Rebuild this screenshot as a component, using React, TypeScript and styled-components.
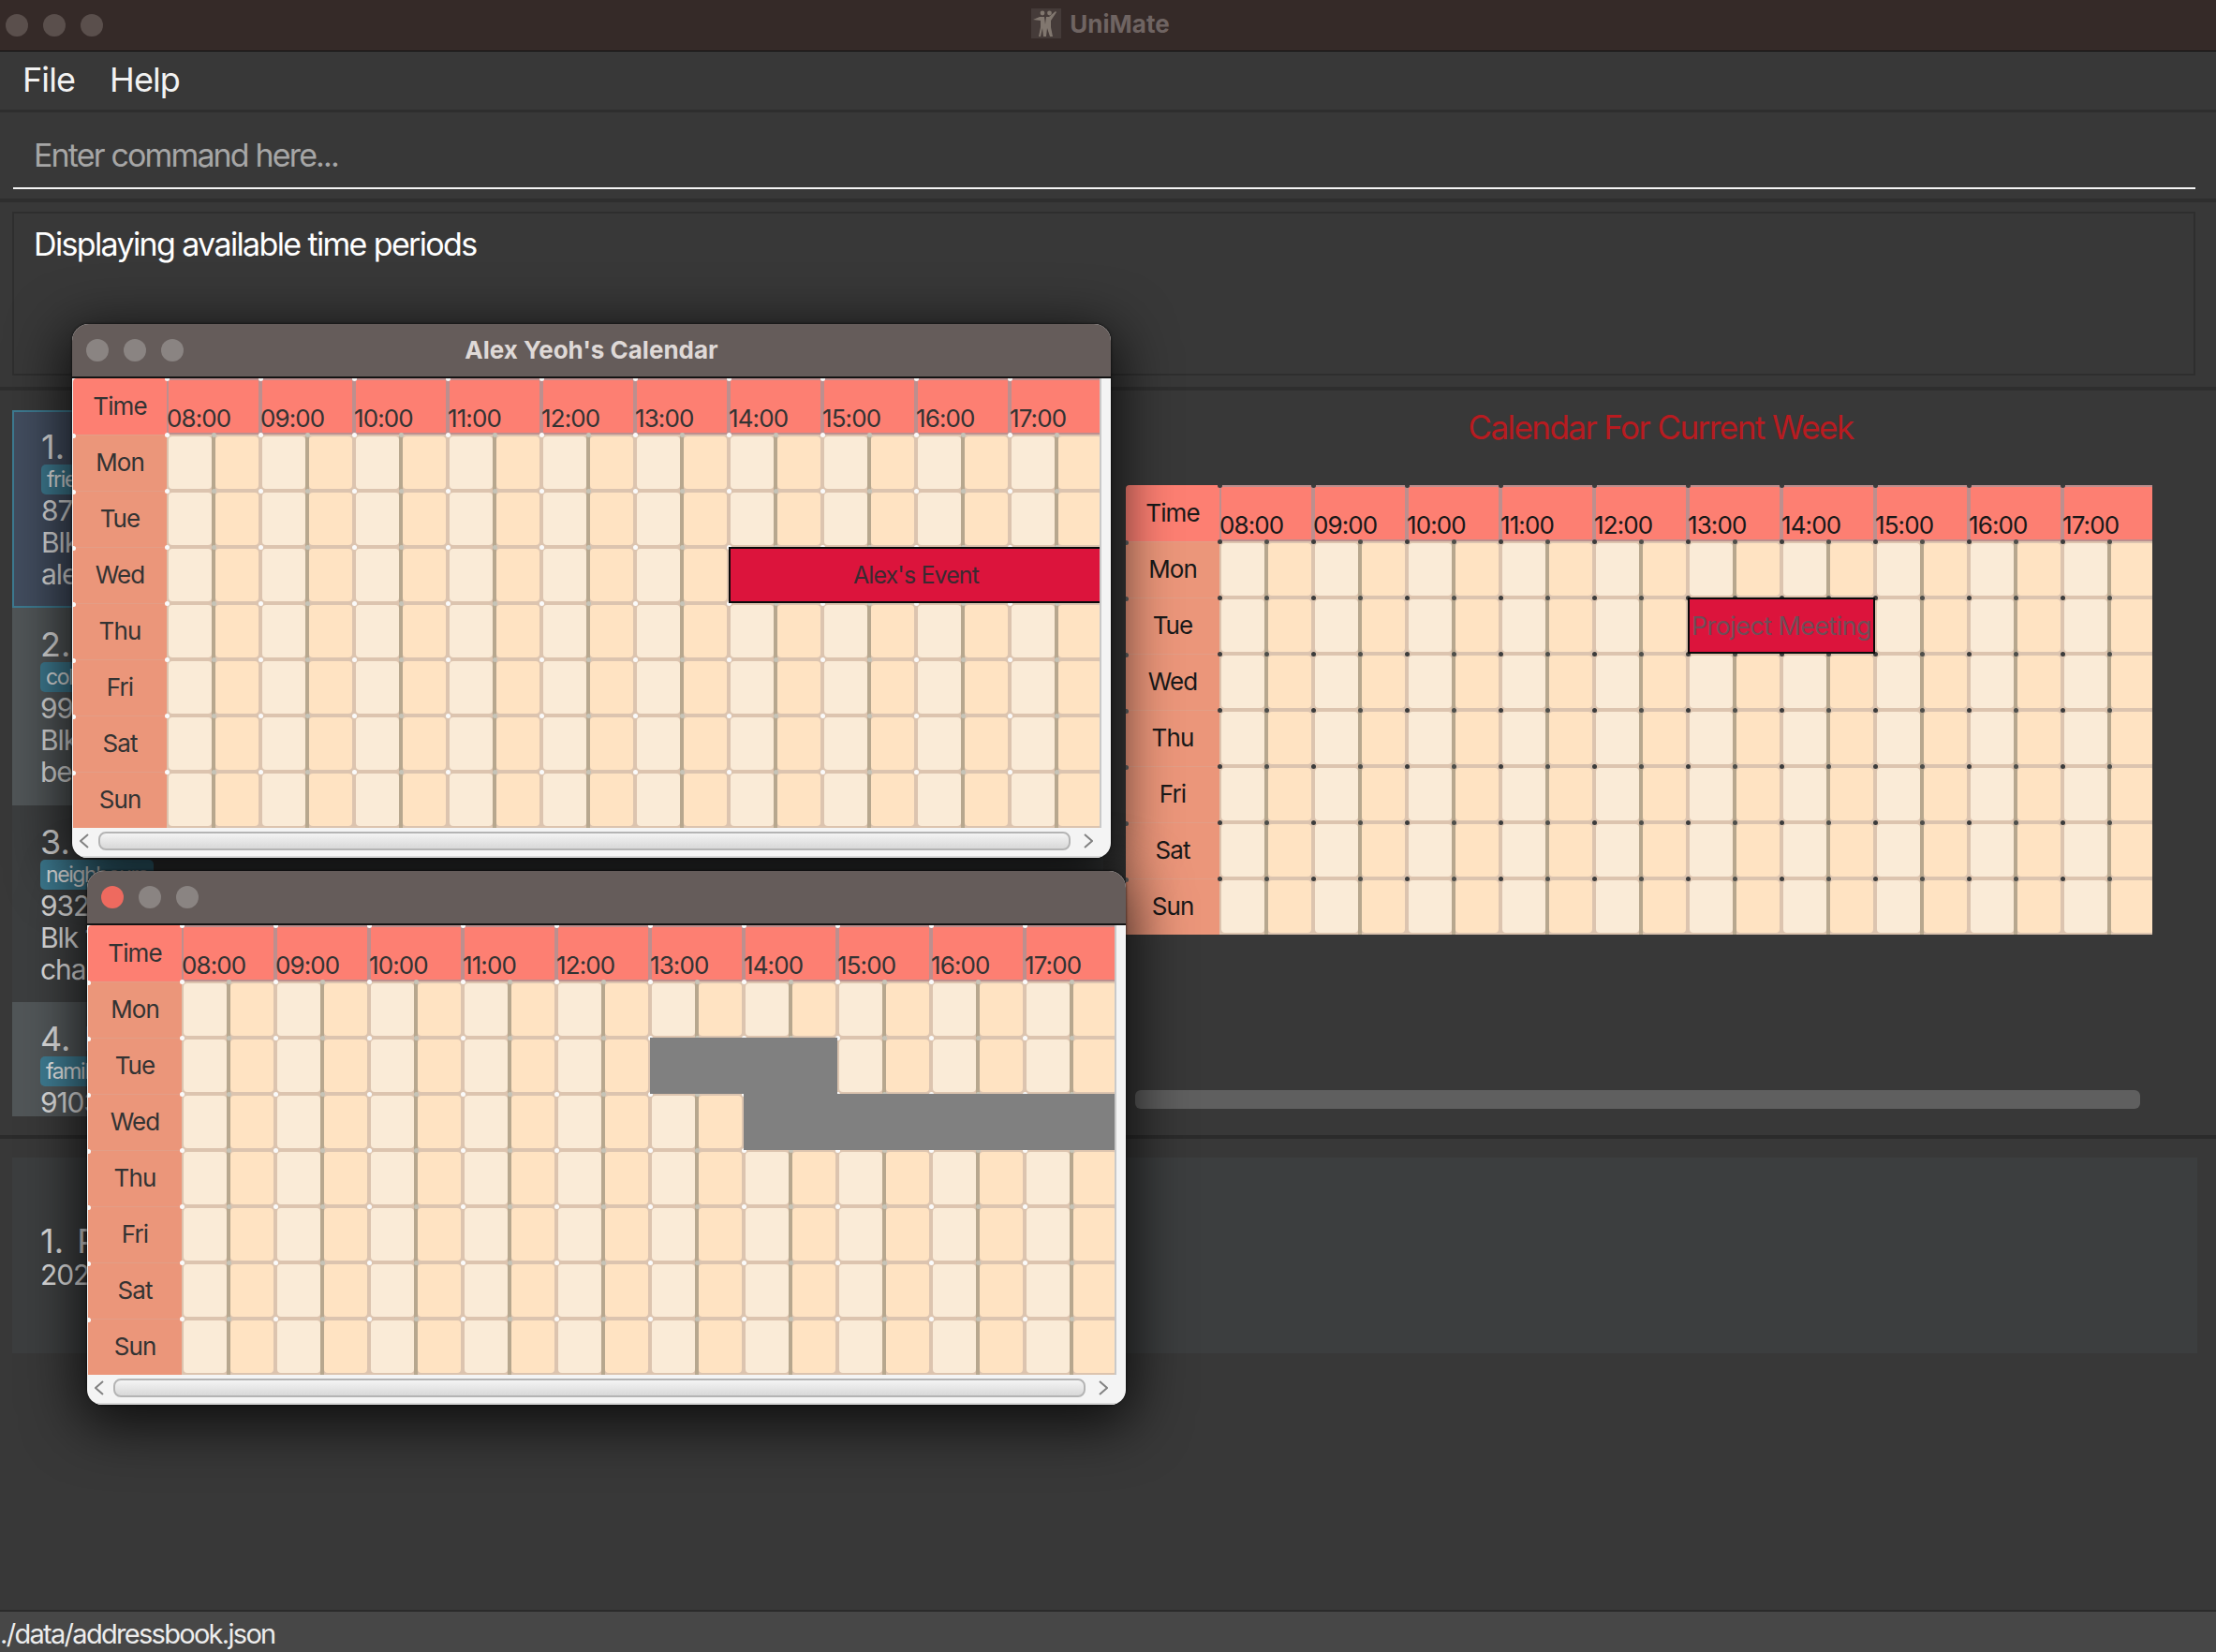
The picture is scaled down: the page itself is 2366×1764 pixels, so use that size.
import styled, { createGlobalStyle } from "styled-components";

const HOURS = ["08:00", "09:00", "10:00", "11:00", "12:00", "13:00", "14:00", "15:00", "16:00", "17:00"];
const DAYS = ["Mon", "Tue", "Wed", "Thu", "Fri", "Sat", "Sun"];
const HALF_HOURS = Array.from({ length: 20 }, (_, i) => i);

type Block = { day: number; start: number; end: number; title?: string; faded?: boolean };

const PERSONS = [
  { name: "Alex Yeoh", tags: ["friends"], phone: "87438807", address: "Blk 30 Geylang Street 29, #06-40", email: "alexyeoh@example.com" },
  { name: "Bernice Yu", tags: ["colleagues", "friends"], phone: "99272758", address: "Blk 30 Lorong 3 Serangoon Gardens, #07-18", email: "berniceyu@example.com" },
  { name: "Charlotte Oliveiro", tags: ["neighbours"], phone: "93210283", address: "Blk 11 Ang Mo Kio Street 74, #11-04", email: "charlotte@example.com" },
  { name: "David Li", tags: ["family"], phone: "91031282", address: "Blk 436 Serangoon Gardens Street 26, #16-43", email: "lidavid@example.com" },
];

const GlobalStyle = createGlobalStyle`
  html, body {
    margin: 0;
    background: #383838;
  }
  * {
    box-sizing: border-box;
  }
`;

const Screen = styled.div`
  position: relative;
  width: 2366px;
  height: 1764px;
  overflow: hidden;
  display: flex;
  flex-direction: column;
  background: #383838;
  color: #f0f0f0;
  font-family: Inter, "Liberation Sans", sans-serif;
`;

const TitleBar = styled.div`
  position: relative;
  height: 55px;
  flex: none;
  display: flex;
  align-items: center;
  justify-content: center;
  gap: 9px;
  padding: 0 16px 4px 0;
  background: #352a28;
  border-bottom: 1px solid #0d0d0d;
`;

const Lights = styled.div<{ $left: number; $gap: number }>`
  position: absolute;
  left: ${(p) => p.$left}px;
  top: 50%;
  transform: translateY(-50%);
  display: flex;
  gap: ${(p) => p.$gap}px;
`;

const Light = styled.span<{ $color: string }>`
  width: 24px;
  height: 24px;
  border-radius: 50%;
  background: ${(p) => p.$color};
`;

const AppName = styled.span`
  font-size: 26px;
  font-weight: 700;
  color: #6f6462;
`;

const MenuBar = styled.div`
  height: 65px;
  flex: none;
  display: flex;
  align-items: center;
  gap: 37px;
  padding: 0 0 3px 24px;
  border-bottom: 3px solid #2e2e2e;
  font-size: 36px;
  letter-spacing: -0.9px;
  color: #f2f2f2;
`;

const CommandArea = styled.div`
  height: 96px;
  flex: none;
  padding: 0 22px 0 14px;
  border-bottom: 4px solid #2e2e2e;
`;

const CommandInput = styled.div`
  height: 82px;
  padding: 26px 0 0 22px;
  border-bottom: 2px solid #f4f4f4;
  font-size: 34px;
  line-height: 40px;
  letter-spacing: -1.85px;
  color: #a6a6a6;
`;

const ResultArea = styled.div`
  height: 201px;
  flex: none;
  padding: 10px 22px 12px 13px;
  border-bottom: 4px solid #2e2e2e;
`;

const ResultBox = styled.div`
  height: 100%;
  padding: 12px 21px;
  border: 2px solid #2e2e2e;
  font-size: 34px;
  line-height: 42px;
  letter-spacing: -1.64px;
  color: #ffffff;
`;

const MainSplit = styled.div`
  height: 799px;
  flex: none;
  display: flex;
  border-bottom: 4px solid #2b2b2b;
`;

const PersonPanel = styled.div`
  width: 1202px;
  flex: none;
  padding: 21px 24px 0 13px;
`;

const PersonList = styled.div`
  height: 754px;
  overflow: hidden;
`;

const PersonCard = styled.div<{ $tone: "selected" | "light" | "dark" }>`
  height: ${(p) => (p.$tone === "selected" ? 211 : 210.5)}px;
  padding: ${(p) => (p.$tone === "selected" ? "19px 0 0 29px" : "21px 0 0 30px")};
  background: ${(p) => (p.$tone === "selected" ? "#424d5f" : p.$tone === "light" ? "#515658" : "#3c3e3f")};
  border: ${(p) => (p.$tone === "selected" ? "2px solid #3e7b91" : "none")};
  color: #dcdcdc;
  font-size: 30px;
  line-height: 34px;
  letter-spacing: -1.1px;
`;

const CardName = styled.div`
  height: 36px;
  font-size: 36px;
  line-height: 36px;
  letter-spacing: 0;
  white-space: pre;
  word-spacing: -3px;
`;

const TagRow = styled.div`
  display: flex;
  gap: 8px;
  margin-top: 1px;
`;

const Tag = styled.span`
  height: 32px;
  padding: 0 6px;
  border-radius: 5px;
  background: #3e7b91;
  color: #e4e4e4;
  font-size: 23px;
  letter-spacing: -1.4px;
  line-height: 32px;
`;

const CalendarPanel = styled.div`
  flex: 1;
  width: 1142px;
  max-width: 1142px;
  display: flex;
  flex-direction: column;
  padding-top: 14px;
`;

const CalendarHeading = styled.div`
  height: 50px;
  text-align: center;
  font-size: 35px;
  line-height: 50px;
  letter-spacing: -1.55px;
  color: #b81b20;
`;

const MainScroller = styled.div`
  width: 1096px;
  height: 480px;
  margin-top: 37px;
  overflow: hidden;
`;

const DarkScrollThumb = styled.div`
  width: 1073px;
  height: 20px;
  margin: 166px 0 0 10px;
  border-radius: 6px;
  background: #5f5f5f;
`;

const EventPanel = styled.div`
  flex: 1;
  padding: 20px 20px 0 13px;
`;

const EventCard = styled.div`
  height: 209px;
  padding: 70px 0 0 30px;
  background: #3c3e3f;
  color: #dcdcdc;
  font-size: 30px;
  line-height: 35px;
  letter-spacing: -1.1px;
`;

const EventTitle = styled.div`
  font-size: 36px;
  line-height: 38px;
  letter-spacing: 0;
  white-space: pre;
  word-spacing: -3px;
`;

const StatusBar = styled.div`
  height: 45px;
  flex: none;
  border-top: 2px solid #2b2b2b;
  background: #474747;
  font-size: 29px;
  line-height: 47px;
  letter-spacing: -1.7px;
  color: #ececec;
  white-space: nowrap;
`;

const Shade = styled.div<{ $x: number; $y: number }>`
  position: absolute;
  left: ${(p) => p.$x}px;
  top: ${(p) => p.$y}px;
  width: 1109px;
  height: 570px;
  border-radius: 18px;
  box-shadow: 0 0 3px rgba(0, 0, 0, 0.85), 0 14px 60px 8px rgba(0, 0, 0, 0.75);
`;

const Window = styled.div<{ $x: number; $y: number }>`
  position: absolute;
  left: ${(p) => p.$x}px;
  top: ${(p) => p.$y}px;
  width: 1109px;
  height: 570px;
  overflow: hidden;
  border-radius: 18px 18px 16px 16px;
  background: #f4f4f4;
`;

const WindowBar = styled.div`
  position: relative;
  height: 58px;
  display: flex;
  align-items: center;
  justify-content: center;
  padding-bottom: 2px;
  background: #655c5a;
  border-bottom: 2px solid #141414;
  font-size: 26px;
  font-weight: 700;
  color: #dfd9d7;
`;

const WindowBody = styled.div`
  height: 480px;
  display: flex;
  padding-left: 1px;
`;

const WindowScroller = styled.div`
  width: 1096px;
  height: 480px;
  overflow: hidden;
  flex: none;
`;

const Gutter = styled.div`
  flex: 1;
  border-left: 2px solid #c9c9c9;
  background: #f4f4f4;
`;

const WindowScrollBar = styled.div`
  height: 32px;
  display: flex;
  align-items: center;
  padding: 0 19px 2px 8px;
  border-bottom: 2px solid #d8d8d8;
`;

const ScrollThumb = styled.div`
  flex: 1;
  height: 20px;
  margin: 0 14px 0 10px;
  border: 2px solid #b4b4b4;
  border-radius: 8px;
  background: linear-gradient(#f4f4f4, #d8d8d8);
`;

const Grid = styled.div<{ $dark?: boolean }>`
  display: grid;
  grid-template-columns: 100px repeat(20, 50px);
  grid-template-rows: repeat(8, 60px);
  width: 1100px;
  color: ${(p) => (p.$dark ? "#191919" : "#333333")};
  font-size: 26px;
  letter-spacing: -0.9px;
`;

const Dot = `
  content: "";
  position: absolute;
  left: -2.5px;
  top: -2.5px;
  width: 5px;
  height: 5px;
  border-radius: 50%;
  z-index: 1;
`;

const TimeCell = styled.div`
  display: flex;
  align-items: center;
  justify-content: center;
  padding-bottom: 2px;
  background: #fd7f72;
  border-radius: 4px 0 0 0;
`;

const DayCell = styled.div<{ $dark?: boolean }>`
  position: relative;
  display: flex;
  align-items: center;
  justify-content: center;
  padding-bottom: 2px;
  background: #eb967a;
  border-top: 1px solid #e39e86;
  &::after {
    ${Dot}
    left: -2px;
    background: ${(p) => (p.$dark ? "#444444" : "#fafafa")};
  }
`;

const HourCell = styled.div<{ $dark?: boolean }>`
  position: relative;
  grid-column: span 2;
  display: flex;
  align-items: flex-end;
  padding: 0;
  background: #fd7f72;
  box-shadow: inset 0 0 0 2px #bd8f8e;
  border-radius: 3px;
  line-height: 34px;
  &::after {
    ${Dot}
    background: ${(p) => (p.$dark ? "#3c3c3c" : "#fafafa")};
  }
`;

const Cell = styled.div<{ $half: boolean; $dark?: boolean }>`
  position: relative;
  padding: 2px;
  background: #dcc4af;
  &::before {
    content: "";
    position: absolute;
    display: ${(p) => (p.$half ? "none" : "block")};
    top: 0;
    bottom: 0;
    right: -2px;
    width: 4px;
    background: #b7a78e;
    z-index: 1;
  }
  &::after {
    ${Dot}
    background: ${(p) =>
      p.$half ? (p.$dark ? "#4e4e4a" : "#c6c4b8") : p.$dark ? "#3c3c3c" : "#fafafa"};
  }
`;

const CellFill = styled.div<{ $tint: boolean }>`
  height: 100%;
  border-radius: 4px;
  background: ${(p) => (p.$tint ? "#ffe3c2" : "#faebd7")};
`;

const EventBlock = styled.div<{ $faded?: boolean }>`
  z-index: 2;
  display: flex;
  align-items: center;
  justify-content: center;
  white-space: nowrap;
  background: #dc143c;
  border: 2px solid #0a0a0a;
  font-size: ${(p) => (p.$faded ? 27 : 25)}px;
  letter-spacing: ${(p) => (p.$faded ? -0.6 : -0.9)}px;
  color: ${(p) => (p.$faded ? "#6e4f58" : "#3b2a31")};
`;

const BusyBlock = styled.div`
  z-index: 2;
  background: #808080;
`;

const Chevron = ({ flip }: { flip?: boolean }) => (
  <svg width="10" height="16" viewBox="0 0 10 16" style={{ flex: "none" }}>
    <path d={flip ? "M1 1l8 7-8 7" : "M9 1L1 8l8 7"} fill="none" stroke="#828282" strokeWidth="2" />
  </svg>
);

const AppIcon = () => (
  <svg width="32" height="32" viewBox="0 0 32 32" style={{ background: "#453b39" }}>
    <g fill="#81776f">
      <circle cx="12" cy="5" r="2.4" />
      <circle cx="19.5" cy="5" r="2.4" />
      <path d="M2 12l7-3h5l1 8 1-8h3l7-6 1 1-6 9v7l2 10h-3l-3-9-1 9h-3l-1-9-2 9H8l2-10v-7z" />
    </g>
  </svg>
);

function WeekGrid({ dark, events = [], busy = [] }: { dark?: boolean; events?: Block[]; busy?: Block[] }) {
  return (
    <Grid $dark={dark}>
      <TimeCell>Time</TimeCell>
      {HOURS.map((hour) => (
        <HourCell key={hour} $dark={dark}>
          {hour}
        </HourCell>
      ))}
      {DAYS.map((day, row) => [
        <DayCell key={day} $dark={dark} style={{ gridRow: row + 2, gridColumn: 1 }}>
          {day}
        </DayCell>,
        ...HALF_HOURS.map((i) => (
          <Cell key={day + i} $half={i % 2 === 1} $dark={dark} style={{ gridRow: row + 2, gridColumn: i + 2 }}>
            <CellFill $tint={i % 2 === 1} />
          </Cell>
        )),
      ])}
      {events.map((e) => (
        <EventBlock
          key={e.title}
          $faded={e.faded}
          style={{ gridRow: e.day + 2, gridColumn: `${e.start + 2} / ${e.end + 2}` }}
        >
          {e.title}
        </EventBlock>
      ))}
      {busy.map((b) => (
        <BusyBlock key={b.day} style={{ gridRow: b.day + 2, gridColumn: `${b.start + 2} / ${b.end + 2}` }} />
      ))}
    </Grid>
  );
}

function CalendarWindow(props: { x: number; y: number; title?: string; closeColor: string; events?: Block[]; busy?: Block[] }) {
  return (
    <Window $x={props.x} $y={props.y}>
      <WindowBar>
        <Lights $left={15} $gap={16}>
          <Light $color={props.closeColor} />
          <Light $color="#8a8482" />
          <Light $color="#8a8482" />
        </Lights>
        {props.title}
      </WindowBar>
      <WindowBody>
        <WindowScroller>
          <WeekGrid events={props.events} busy={props.busy} />
        </WindowScroller>
        <Gutter />
      </WindowBody>
      <WindowScrollBar>
        <Chevron />
        <ScrollThumb />
        <Chevron flip />
      </WindowScrollBar>
    </Window>
  );
}

export default function App() {
  return (
    <Screen>
      <GlobalStyle />
      <TitleBar>
        <Lights $left={6} $gap={16}>
          <Light $color="#5a4f4c" />
          <Light $color="#5a4f4c" />
          <Light $color="#5a4f4c" />
        </Lights>
        <AppIcon />
        <AppName>UniMate</AppName>
      </TitleBar>
      <MenuBar>
        <span>File</span>
        <span>Help</span>
      </MenuBar>
      <CommandArea>
        <CommandInput>Enter command here...</CommandInput>
      </CommandArea>
      <ResultArea>
        <ResultBox>Displaying available time periods</ResultBox>
      </ResultArea>
      <MainSplit>
        <PersonPanel>
          <PersonList>
            {PERSONS.map((person, i) => (
              <PersonCard key={person.name} $tone={i === 0 ? "selected" : i === 2 ? "dark" : "light"}>
                <CardName>{`${i + 1}.  ${person.name}`}</CardName>
                <TagRow>
                  {person.tags.map((tag) => (
                    <Tag key={tag}>{tag}</Tag>
                  ))}
                </TagRow>
                <div>{person.phone}</div>
                <div>{person.address}</div>
                <div>{person.email}</div>
              </PersonCard>
            ))}
          </PersonList>
        </PersonPanel>
        <CalendarPanel>
          <CalendarHeading>Calendar For Current Week</CalendarHeading>
          <MainScroller>
            <WeekGrid dark events={[{ day: 1, start: 10, end: 14, title: "Project Meeting", faded: true }]} />
          </MainScroller>
          <DarkScrollThumb />
        </CalendarPanel>
      </MainSplit>
      <EventPanel>
        <EventCard>
          <EventTitle>{"1.  Project Meeting"}</EventTitle>
          <div>2023-11-07 13:00 - 15:00</div>
        </EventCard>
      </EventPanel>
      <StatusBar>./data/addressbook.json</StatusBar>

      <Shade $x={77} $y={346} />
      <Shade $x={93} $y={930} />
      <CalendarWindow
        x={77}
        y={346}
        title="Alex Yeoh's Calendar"
        closeColor="#8a8482"
        events={[{ day: 2, start: 12, end: 20, title: "Alex's Event" }]}
      />
      <CalendarWindow
        x={93}
        y={930}
        closeColor="#ee6a5f"
        busy={[
          { day: 1, start: 10, end: 14 },
          { day: 2, start: 12, end: 20 },
        ]}
      />
    </Screen>
  );
}
